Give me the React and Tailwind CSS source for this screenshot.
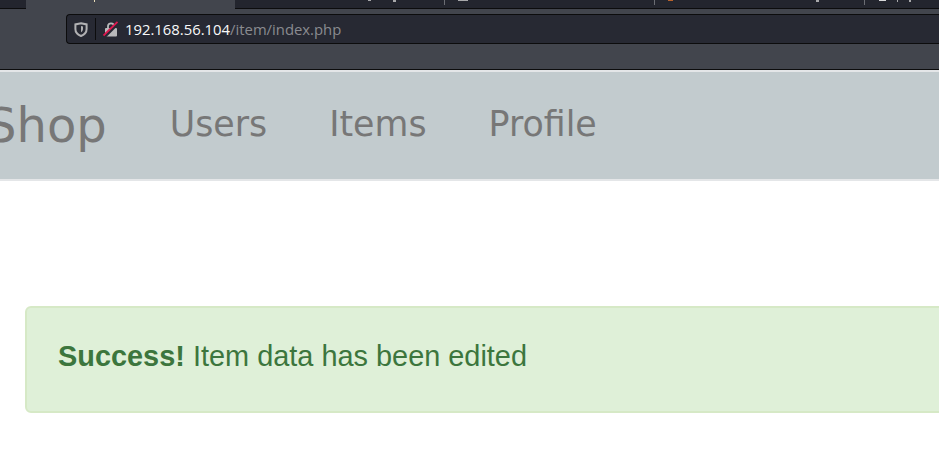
import React from "react";

const navLinks = ["Users", "Items", "Profile"];

function ShieldIcon() {
  return (
    <svg width="14" height="15" viewBox="0 0 14 15" fill="none" aria-hidden>
      <path d="M7 1.2 L12.6 2.4 V7 C12.6 10.5 10 12.8 7 14 C4 12.8 1.4 10.5 1.4 7 V2.4 Z" stroke="#b1b1b3" strokeWidth="2" />
      <path d="M7 4 L9 4.5 V7 C9 8.5 8 9.6 7 10.2 Z" fill="#b1b1b3" />
    </svg>
  );
}

function BrokenLockIcon() {
  return (
    <svg width="16" height="16" viewBox="0 0 16 16" fill="none" aria-hidden>
      <path d="M5 7 V5 C5 1.5 11 1.5 11 5 V7" stroke="#b9b9bb" strokeWidth="1.8" />
      <rect x="2" y="7" width="12" height="8.5" rx="1" fill="#b9b9bb" />
      <path d="M1 16 L15.5 1.5" stroke="#272933" strokeWidth="3.4" />
      <path d="M0.5 14.5 L14.5 0.8" stroke="#e0174f" strokeWidth="1.8" />
    </svg>
  );
}

export default function App() {
  return (
    <div className="w-[939px] h-[451px] overflow-hidden bg-white">
      {/* Browser chrome */}
      <div className="h-[70px] bg-[#42454d] border-b border-[#0c0c0d]">
        <div className="h-[9px] flex bg-[#23252e] border-b border-[#0c0c0d]">
          <div className="w-[26px]" />
          {/* active tab, only the bottom of its title is still in the crop */}
          <div className="w-[209px] h-[9px] bg-[#42454d] pl-[68px]">
            <div className="w-px h-[2px] bg-[#e8dcb8]" />
          </div>
          <div className="w-[209px] flex gap-[22px] pl-[133px]">
            <div className="w-[3px] h-px bg-[#a8a8aa]" />
            <div className="w-[3px] h-[2px] bg-[#a8a8aa]" />
          </div>
          <div className="w-px h-[5px] bg-[#6b6d73]" />
          <div className="w-[209px] pl-[13px]">
            <div className="w-[10px] h-px bg-[#a8a8aa]" />
          </div>
          <div className="w-px h-[5px] bg-[#6b6d73]" />
          <div className="w-[209px] flex pl-[13px]">
            <div className="w-[5px] h-px bg-[#b8622c]" />
            <div className="ml-[143px] w-[3px] h-[2px] bg-[#a8a8aa]" />
          </div>
          <div className="w-px h-[5px] bg-[#6b6d73]" />
          <div className="flex pl-[14px] gap-[11px]">
            <div className="w-[7px] h-px bg-[#d8d8da]" />
            <div className="w-px h-[2px] bg-[#a8a8aa]" />
            <div className="w-[2px] h-[2px] bg-[#a8a8aa]" />
          </div>
        </div>
        <div className="pt-[5px] pl-[66px]">
          <div className="h-[30px] flex items-center bg-[#272933] border border-[#0c0c0d] border-r-0 rounded-l-[4px]">
            <div className="w-[28px] flex justify-center"><ShieldIcon /></div>
            <div className="w-px h-[22px] bg-[#0c0c0d]" />
            <div className="w-[29px] flex justify-center"><BrokenLockIcon /></div>
            <span className="pt-[1px] font-['Open_Sans',sans-serif] text-[14.85px] text-[#f9f9fa]">
              192.168.56.104<span className="text-[#8a8b90]">/item/index.php</span>
            </span>
          </div>
        </div>
      </div>

      {/* Navbar */}
      <nav className="h-[105px] pb-[2px] bg-[#c2cbce] border-t-2 border-[#e4e6e8] box-content flex items-center font-['DejaVu_Sans',sans-serif] text-[#777777]">
        <span className="-ml-[14px] text-[48px] leading-none">Shop</span>
        <div className="flex gap-[62px] ml-[63px]">
          {navLinks.map((label) => (
            <a key={label} className="text-[34.8px] leading-none text-[#777777]">{label}</a>
          ))}
        </div>
      </nav>
      <div className="h-[2px] bg-[#e4e6e8]" />

      {/* Alert */}
      <div className="mt-[125px] ml-[25px] h-[107px] w-[1000px] flex items-center pl-[31px] pb-[6px] bg-[#dff0d8] border-2 border-[#d6e9c6] rounded-[6px] font-['Liberation_Sans',sans-serif] text-[28.9px] text-[#3c763d]">
        <p><strong className="font-bold">Success!</strong> Item data has been edited</p>
      </div>
    </div>
  );
}
